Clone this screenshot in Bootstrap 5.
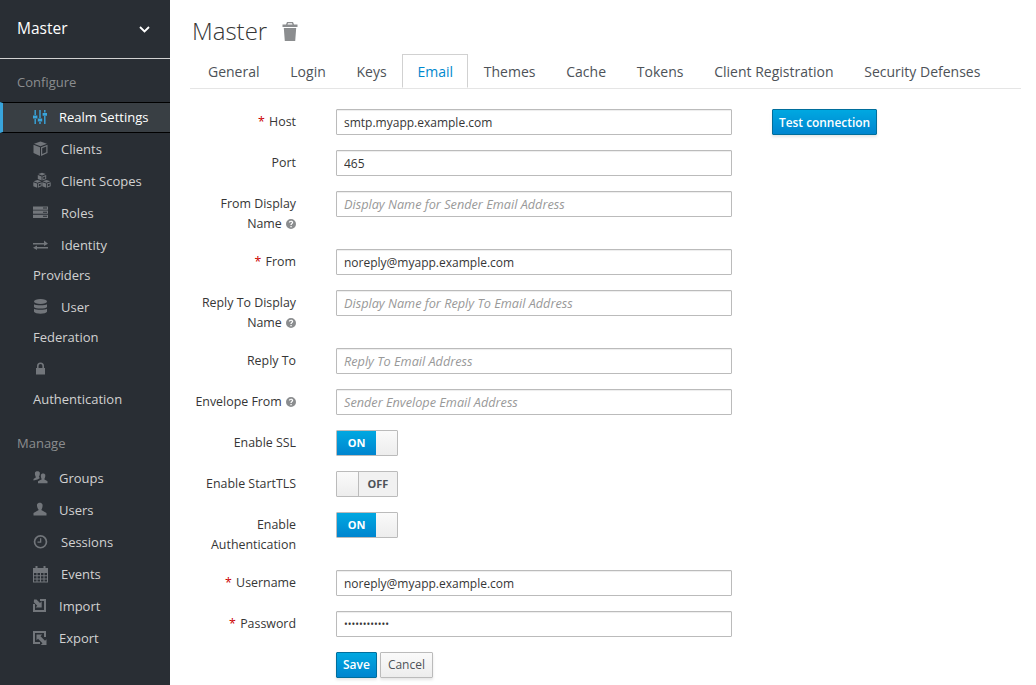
<!DOCTYPE html>
<html lang="en">
<head>
    <meta charset="UTF-8">
    <meta name="viewport" content="width=device-width, initial-scale=1.0">
    <link href="https://cdn.jsdelivr.net/npm/bootstrap@5.3.3/dist/css/bootstrap.min.css" rel="stylesheet">
    <title>Master - Email</title>
    <style>
        html, body { height: 100%; overflow: hidden; }
        body { font-family: "Open Sans", sans-serif; font-size: 13px; color: #363636; background: #fff; }
        .side-panel { width: 170px; flex: 0 0 170px; background: #292e34; color: #d1d1d1; height: 685px; }
        .realm-head { height: 59px; padding: 0 20px 0 17px; border-bottom: 1px solid #d1d1d1; color: #fff; font-size: 15.5px; }
        .side-title { color: #8b8d8f; font-size: 13px; padding-left: 17px; line-height: 18px; }
        .side-title.first { margin-top: 14px; margin-bottom: 11px; }
        .side-title.second { margin-top: 20px; margin-bottom: 11px; }
        .side-link { display: block; padding: 0 20px 0 33px; line-height: 30px; margin-bottom: 2px; color: #d1d1d1; text-decoration: none; font-size: 13px; }
        .side-link svg { width: 20px; height: 18px; vertical-align: -4px; margin-right: 8px; fill: #72767b; }
        .side-link.tight svg { margin-right: 6px; }
        .side-link.lock svg { margin-right: 12px; }
        .side-link.on { background: #393f44; color: #fff; border-top: 1px solid #000; border-bottom: 1px solid #000; border-left: 3px solid #39a5dc; padding-left: 30px; line-height: 29px; height: 31px; margin-bottom: 1px; }
        .side-link.on svg { fill: #39a5dc; }
        .main-pane { padding: 0 15px 0 20px; min-width: 0; }
        .page-name { font-weight: 300; font-size: 24px; color: #363636; line-height: 30px; margin: 16px 0 8px 2px; gap: 15px; }
        .page-name svg { width: 16px; height: 19px; fill: #8b8d8f; }
        .nav-tabs.email-tabs { border-bottom: 1px solid #e5e5e5; margin-bottom: 20px; padding-left: 2.6px; font-size: 14px; }
        .email-tabs .nav-link { color: #4d5258; padding: 7px 14.4px 6px; line-height: 20px; height: 34px; border: 1px solid transparent; border-radius: 0; margin: 0; }
        .email-tabs .nav-link.active { color: #0088ce; border-color: #d1d1d1 #d1d1d1 #fff; border-radius: 0; }
        .form-line { margin-bottom: 15px; }
        .line-label { width: 106px; flex: 0 0 106px; margin: 0 40px 0 0; padding-top: 3px; text-align: right; line-height: 20px; font-size: 12.4px; font-weight: 500; color: #363636; }
        .line-label i { color: #c00; font-style: normal; margin-right: 1px; }
        .line-field { width: 396px; flex: 0 0 396px; }
        .form-control.email-input { height: 26px; min-height: 26px; padding: 2px 7px; border: 1px solid #bbb; border-radius: 1px; font-size: 12px; line-height: 20px; color: #363636; box-shadow: inset 0 1px 1px rgba(3,3,3,.075); }
        .email-input::placeholder { color: #999; font-style: italic; font-size: 12.7px; }
        .email-input.dots { font-size: 10px; }
        .hint-icon { width: 10px; height: 10px; vertical-align: -1px; margin-left: 1px; }
        .switch-box { width: 62px; height: 26px; border: 1px solid #bbb; border-radius: 1px; font-size: 11px; font-weight: 700; overflow: hidden; }
        .switch-on { width: 39px; background: linear-gradient(#00a8e1, #0085cf); color: #fff; }
        .switch-off { width: 39px; background: #f1f1f1; color: #4d5258; border-left: 1px solid #bbb; }
        .switch-handle { flex: 1; background: linear-gradient(#fafafa, #ededed); }
        .btn.pf-btn { font-size: 12px; font-weight: 600; line-height: 18px; padding: 3px 6px; border-radius: 1px; box-shadow: 0 2px 3px rgba(3,3,3,.1); }
        .btn.pf-blue { color: #fff; background: linear-gradient(#00a8e1, #0085cf); border: 1px solid #006e9c; }
        .btn.pf-grey { color: #4d5258; font-weight: 400; padding: 3px 7px; background: linear-gradient(#fafafa, #ededed); border: 1px solid #bbb; }
        .btn.pf-test { font-size: 11.9px; }
        .test-col { margin-left: 40px; }
        .button-row { gap: 3px; }
    </style>
</head>
<body class="d-flex">
    <svg width="0" height="0" class="position-absolute">
        <symbol id="hint" viewBox="0 0 10 10"><path fill="#8b8d8f" fill-rule="evenodd" d="M5 0a5 5 0 1 1 0 10A5 5 0 0 1 5 0zM4.400 7v1.300h1.300V7zM5 1.700c-1.300 0-2.100.7-2.200 1.900h1.200c.1-.5.400-.8 1-.8s.9.300.9.700c0 .9-1.500.9-1.500 2.600h1.300c0-1.200 1.500-1.300 1.500-2.800 0-1-.9-1.600-2.200-1.600z"/></symbol>
    </svg>
    <div class="side-panel flex-shrink-0">
        <div class="realm-head d-flex align-items-center justify-content-between">
            <span>Master</span>
            <svg width="11" height="7" viewBox="0 0 11 7" fill="none" stroke="#fff" stroke-width="1.800"><path d="M1 1l4.500 4.500L10 1"/></svg>
        </div>
        <div class="side-title first">Configure</div>
        <a class="side-link on tight" href="#"><svg viewBox="0 0 20 18"><path d="M1.500 2h1.400v5H1.500zM1.500 11h1.400v5H1.500zM0 7.500h4.400v3H0zM6.300 2h1.400v8H6.300zM6.300 14h1.400v2H6.300zM4.800 10.500h4.400v3H4.800zM11.100 2h1.400v2.500h-1.400zM11.100 8h1.400v8h-1.400zM9.600 5h4.400v2.800H9.600z"/></svg>Realm Settings</a>
        <a class="side-link" href="#"><svg viewBox="0 0 20 18"><path d="M7.500 1.500l6.500 2.200-6.500 2.500L1 3.700zM.5 4.800L7 7.300V16L.5 13zM14.500 4.800V13L8 16V7.300zm-1.200 1.800L9.200 8.200v5.900l4.100-1.900z"/></svg>Clients</a>
        <a class="side-link" href="#"><svg viewBox="0 0 20 18"><path d="M9 .8l3.800 1.300L9 3.500 5.200 2.100zM4.800 3l3.800 1.400v4.100L4.800 7zM13.200 3v4L9.400 8.500V4.400zm-1 1.500L10.300 5.100v2.100l1.900-.8z"/><path d="M4.500 8l3.800 1.300-3.800 1.400L.7 9.300zM.3 10.200l3.800 1.400v4.100L.3 14.200zM8.700 10.200v4l-3.800 1.500v-4.100zm-1 1.500l-1.900.6v2.100l1.900-.8z"/><path d="M13.500 8l3.800 1.300-3.800 1.400-3.800-1.400zM9.300 10.200l3.800 1.400v4.100l-3.800-1.500zM17.700 10.200v4l-3.800 1.500v-4.100zm-1 1.500l-1.900.6v2.100l1.900-.8z"/></svg>Client Scopes</a>
        <a class="side-link" href="#"><svg viewBox="0 0 20 18"><path d="M0 2.500h15v3.200H0zM0 6.600h15v3.200H0zM0 10.700h15v3.200H0z"/><path fill="#292e34" d="M10 3.600h4v1h-4zM10 7.700h4v1h-4zM10 11.800h4v1h-4z"/></svg>Roles</a>
        <a class="side-link" href="#"><svg viewBox="0 0 20 18"><path d="M0 6h11V3.500L15 6.700 11 9V7.500H0zM15 11.500H4V13L0 10.800 4 8.500V10h11z" transform="translate(0 1)"/></svg>Identity Providers</a>
        <a class="side-link" href="#"><svg viewBox="0 0 20 18"><ellipse cx="7.500" cy="3.500" rx="6.500" ry="2.500"/><path d="M1 6.200c1.500 1.500 11.500 1.500 13 0V9c-1 2-12 2-13 0zM1 10.700c1.500 1.500 11.500 1.500 13 0v3c-1 2.600-12 2.600-13 0z"/></svg>User Federation</a>
        <a class="side-link lock" href="#"><svg viewBox="0 0 20 18"><path d="M4 8V6a3.500 3.500 0 0 1 7 0v2h1v6.500H3V8zm1.600 0h3.800V6a1.900 1.900 0 0 0-3.800 0z"/></svg>Authentication</a>
        <div class="side-title second">Manage</div>
        <a class="side-link tight" href="#"><svg viewBox="0 0 20 18"><path d="M2 3.500c.8-1.700 4-1.700 4.800 0 .3 1.700-.3 3.400-1 4.500l1.200 1-2.500 1.500L.5 11.500V10l2.500-1.700C2.200 7 1.700 5 2 3.500zM8 5.500c.7-1.500 3.500-1.500 4.200 0 .4 1.700-.2 3.500-1 4.700l3.300 2.100v2H5v-2l3.800-2.100C8 9 7.600 7 8 5.500z"/></svg>Groups</a>
        <a class="side-link tight" href="#"><svg viewBox="0 0 20 18"><path d="M4 3.500c.8-2.300 4.700-2.300 5.500 0 .4 2-.4 4.300-1.200 5.500l5.200 3v2.500H.5V12l5.200-3C4.800 7.700 3.700 5.500 4 3.500z"/></svg>Users</a>
        <a class="side-link" href="#"><svg viewBox="0 0 20 18"><path fill-rule="evenodd" d="M7.500 2a6.800 6.800 0 1 1 0 13.600A6.800 6.800 0 0 1 7.500 2zm0 1.700a5.100 5.100 0 1 0 0 10.200 5.100 5.100 0 0 0 0-10.200zM7 5.200h1.300v4.600H4.500V8.600H7z"/></svg>Sessions</a>
        <a class="side-link" href="#"><svg viewBox="0 0 20 18"><path fill-rule="evenodd" d="M0 3h2.500V1h2v2h6V1h2v2H15v14.500H0zm1 5v2.200h2.500V8zm3.500 0v2.200H7V8zM8 8v2.200h2.500V8zm3.500 0v2.200H14V8zM1 11.200v2.200h2.500v-2.200zm3.500 0v2.200H7v-2.200zm3.500 0v2.200h2.500v-2.200zm3.500 0v2.200H14v-2.200zM1 14.400v2.100h2.500v-2.100zm3.500 0v2.100H7v-2.100zm3.500 0v2.100h2.500v-2.100zm3.500 0v2.100H14v-2.100z"/></svg>Events</a>
        <a class="side-link tight" href="#"><svg viewBox="0 0 20 18"><path d="M0 2h13v13H0V7h2v6h9V4H7V2zM1 2.500h2.500L7 6l1.700-1.700V10.500H2.500L4.300 8.700.8 5.200z"/></svg>Import</a>
        <a class="side-link tight" href="#"><svg viewBox="0 0 20 18"><path d="M0 2h13v6h-2V4H2v9h5v2H0zM3.500 5.500h5.700L7.500 7.200l4.500 4.500 1.500-1.500V16H7.800l1.700-1.700L5 9.800 3.500 11.200z"/></svg>Export</a>
    </div>

    <div class="main-pane flex-grow-1">
        <div class="page-name d-flex align-items-center">
            <span>Master</span>
            <svg viewBox="0 0 16 19"><path d="M5 0h6l1 2.500h3.500V5H.5V2.500H4zM6 1.300l-.5 1.200h5L10 1.300zM1.800 6h12.400l-1 13H2.800z"/></svg>
        </div>
        <ul class="nav nav-tabs email-tabs">
            <li class="nav-item"><a class="nav-link" href="#">General</a></li>
            <li class="nav-item"><a class="nav-link" href="#">Login</a></li>
            <li class="nav-item"><a class="nav-link" href="#">Keys</a></li>
            <li class="nav-item"><a class="nav-link active" href="#">Email</a></li>
            <li class="nav-item"><a class="nav-link" href="#">Themes</a></li>
            <li class="nav-item"><a class="nav-link" href="#">Cache</a></li>
            <li class="nav-item"><a class="nav-link" href="#">Tokens</a></li>
            <li class="nav-item"><a class="nav-link" href="#">Client Registration</a></li>
            <li class="nav-item"><a class="nav-link" href="#">Security Defenses</a></li>
        </ul>
        <form>
            <div class="d-flex form-line">
                <label class="line-label"><i>*</i> Host</label>
                <div class="line-field"><input class="form-control email-input" value="smtp.myapp.example.com"></div>
                <div class="test-col"><button type="button" class="btn pf-btn pf-blue pf-test">Test connection</button></div>
            </div>
            <div class="d-flex form-line">
                <label class="line-label">Port</label>
                <div class="line-field"><input class="form-control email-input" value="465"></div>
            </div>
            <div class="d-flex form-line">
                <label class="line-label">From Display Name <svg class="hint-icon"><use href="#hint"/></svg></label>
                <div class="line-field"><input class="form-control email-input" placeholder="Display Name for Sender Email Address"></div>
            </div>
            <div class="d-flex form-line">
                <label class="line-label"><i>*</i> From</label>
                <div class="line-field"><input class="form-control email-input" value="noreply@myapp.example.com"></div>
            </div>
            <div class="d-flex form-line">
                <label class="line-label">Reply To Display Name <svg class="hint-icon"><use href="#hint"/></svg></label>
                <div class="line-field"><input class="form-control email-input" placeholder="Display Name for Reply To Email Address"></div>
            </div>
            <div class="d-flex form-line">
                <label class="line-label">Reply To</label>
                <div class="line-field"><input class="form-control email-input" placeholder="Reply To Email Address"></div>
            </div>
            <div class="d-flex form-line">
                <label class="line-label">Envelope From <svg class="hint-icon"><use href="#hint"/></svg></label>
                <div class="line-field"><input class="form-control email-input" placeholder="Sender Envelope Email Address"></div>
            </div>
            <div class="d-flex form-line">
                <label class="line-label">Enable SSL</label>
                <div class="line-field"><div class="switch-box d-flex"><span class="switch-on d-flex align-items-center justify-content-center">ON</span><span class="switch-handle"></span></div></div>
            </div>
            <div class="d-flex form-line">
                <label class="line-label">Enable StartTLS</label>
                <div class="line-field"><div class="switch-box d-flex"><span class="switch-handle"></span><span class="switch-off d-flex align-items-center justify-content-center">OFF</span></div></div>
            </div>
            <div class="d-flex form-line">
                <label class="line-label">Enable Authentication</label>
                <div class="line-field"><div class="switch-box d-flex"><span class="switch-on d-flex align-items-center justify-content-center">ON</span><span class="switch-handle"></span></div></div>
            </div>
            <div class="d-flex form-line">
                <label class="line-label"><i>*</i> Username</label>
                <div class="line-field"><input class="form-control email-input" value="noreply@myapp.example.com"></div>
            </div>
            <div class="d-flex form-line">
                <label class="line-label"><i>*</i> Password</label>
                <div class="line-field"><input type="password" class="form-control email-input dots" value="************"></div>
            </div>
            <div class="d-flex">
                <div class="line-label"></div>
                <div class="d-flex button-row">
                    <button type="button" class="btn pf-btn pf-blue">Save</button>
                    <button type="button" class="btn pf-btn pf-grey">Cancel</button>
                </div>
            </div>
        </form>
    </div>

    <script src="https://cdn.jsdelivr.net/npm/bootstrap@5.3.3/dist/js/bootstrap.bundle.min.js"></script>
</body>
</html>
